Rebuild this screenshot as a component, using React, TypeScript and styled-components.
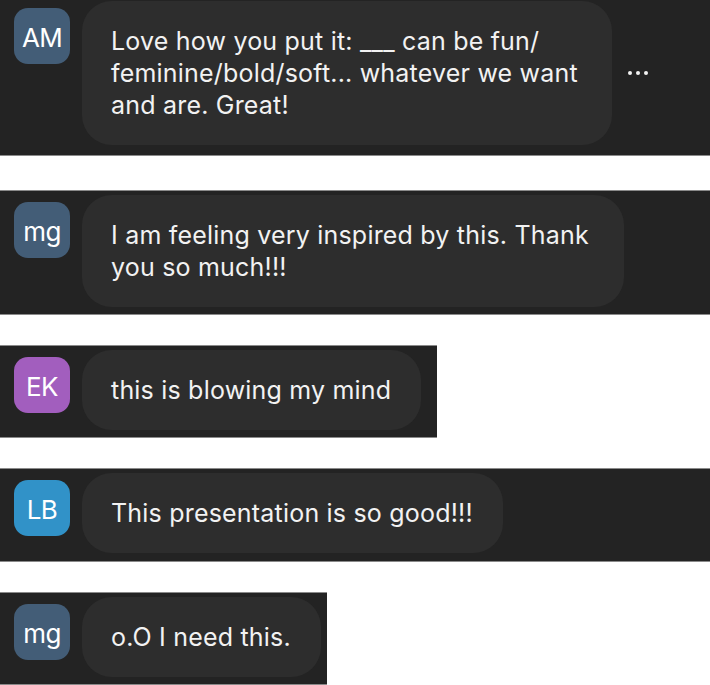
import React from "react";
import styled, { createGlobalStyle } from "styled-components";

const Global = createGlobalStyle`
  html, body { margin: 0; padding: 0; background: #ffffff; }
  body { font-family: "Inter", "Liberation Sans", sans-serif; overflow: hidden; }
`;

const Feed = styled.div`
  display: flex;
  flex-direction: column;
  align-items: flex-start;
  gap: 30px;
  margin-top: -4px;
  width: 710px;
`;

const Panel = styled.div<{ $width: string; $padBottom: number; $extraGap: number }>`
  box-sizing: border-box;
  width: ${(p) => p.$width};
  display: flex;
  align-items: flex-start;
  gap: 12px;
  padding: 4px 0 ${(p) => p.$padBottom}px 14px;
  margin-bottom: ${(p) => p.$extraGap}px;
  background: #232323;
  border-top: 1px solid #8a8a8a;
  border-bottom: 1px solid #8a8a8a;
`;

const Avatar = styled.div<{ $bg: string }>`
  flex: 0 0 auto;
  width: 56px;
  height: 56px;
  margin-top: 7px;
  border-radius: 14px;
  background: ${(p) => p.$bg};
  color: #ffffff;
  font-size: 26px;
  font-weight: 400;
  letter-spacing: -0.6px;
  display: flex;
  align-items: center;
  justify-content: center;
  padding-top: 2px;
  box-sizing: border-box;
`;

const Bubble = styled.div<{ $minWidth: number }>`
  box-sizing: border-box;
  min-width: ${(p) => p.$minWidth}px;
  background: #2d2d2d;
  border-radius: 30px;
  padding: 24px 30px 24px 29px;
  color: #f2f2f2;
  font-size: 25px;
  line-height: 32px;
  letter-spacing: 0.2px;
  white-space: nowrap;
`;

const MoreButton = styled.div`
  display: flex;
  gap: 4px;
  align-self: center;
  margin-left: 4px;
`;

const Dot = styled.span`
  width: 4px;
  height: 4px;
  border-radius: 50%;
  background: #f2f2f2;
`;

type Msg = {
  initials: string;
  color: string;
  lines: string[];
  width: string;
  bubbleMin: number;
  padBottom: number;
  extraGap: number;
  more?: boolean;
};

const messages: Msg[] = [
  {
    initials: "AM",
    color: "#435d77",
    lines: [
      "Love how you put it: ___ can be fun/",
      "feminine/bold/soft... whatever we want",
      "and are. Great!",
    ],
    width: "710px",
    bubbleMin: 530,
    padBottom: 10,
    extraGap: 4,
    more: true,
  },
  {
    initials: "mg",
    color: "#435d77",
    lines: ["I am feeling very inspired by this. Thank", "you so much!!!"],
    width: "710px",
    bubbleMin: 542,
    padBottom: 7,
    extraGap: 0,
  },
  {
    initials: "EK",
    color: "#a25ebe",
    lines: ["this is blowing my mind"],
    width: "437px",
    bubbleMin: 0,
    padBottom: 7,
    extraGap: 0,
  },
  {
    initials: "LB",
    color: "#3192c8",
    lines: ["This presentation is so good!!!"],
    width: "710px",
    bubbleMin: 0,
    padBottom: 8,
    extraGap: 0,
  },
  {
    initials: "mg",
    color: "#435d77",
    lines: ["o.O I need this."],
    width: "327px",
    bubbleMin: 0,
    padBottom: 7,
    extraGap: 0,
  },
];

export default function App() {
  return (
    <>
      <Global />
      <Feed>
        {messages.map((m, i) => (
          <Panel key={i} $width={m.width} $padBottom={m.padBottom} $extraGap={m.extraGap}>
            <Avatar $bg={m.color}>{m.initials}</Avatar>
            <Bubble $minWidth={m.bubbleMin}>
              {m.lines.map((l, j) => (
                <React.Fragment key={j}>
                  {j > 0 && <br />}
                  {l}
                </React.Fragment>
              ))}
            </Bubble>
            {m.more && (
              <MoreButton>
                <Dot />
                <Dot />
                <Dot />
              </MoreButton>
            )}
          </Panel>
        ))}
      </Feed>
    </>
  );
}
